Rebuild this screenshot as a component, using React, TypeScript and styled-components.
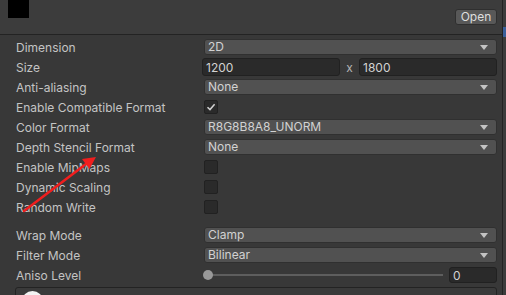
import React from "react";
import styled, { createGlobalStyle } from "styled-components";

const Global = createGlobalStyle`
  body {
    margin: 0;
    background: #383838;
    overflow: hidden;
    font-family: Inter, "Liberation Sans", sans-serif;
    font-size: 12px;
  }
`;

const Window = styled.div`
  position: relative;
  display: flex;
  width: 506px;
  height: 295px;
  overflow: hidden;
  background: #383838;
`;

const Main = styled.div`
  flex: 1;
  display: flex;
  flex-direction: column;
`;

const Header = styled.div`
  height: 34px;
  flex-shrink: 0;
  display: flex;
  justify-content: space-between;
  align-items: flex-start;
  background: #3c3c3c;
  border-bottom: 1px solid #232323;
`;

const Swatch = styled.div`
  width: 21px;
  height: 18px;
  margin-left: 8px;
  background: #000;
`;

const OpenButton = styled.div`
  margin-top: 9px;
  margin-right: 5px;
  width: 42px;
  height: 16px;
  box-sizing: border-box;
  border: 1px solid #2f2f2f;
  border-radius: 3px;
  background: #585858;
  color: #dedede;
  font-size: 12px;
  line-height: 14px;
  text-align: center;
`;

const Body = styled.div`
  padding: 2px 5px 0 16px;
  display: flex;
  flex-direction: column;
`;

const Row = styled.div`
  height: 20px;
  display: grid;
  grid-template-columns: 186px 1fr;
  align-items: center;
`;

const Label = styled.div`
  color: #c4c4c4;
  white-space: nowrap;
`;

const Gap = styled.div`
  height: 8px;
`;

const Popup = styled.div`
  height: 16px;
  margin-left: 2px;
  box-sizing: border-box;
  border: 1px solid #303030;
  border-radius: 3px;
  background: #515151;
  color: #d2d2d2;
  padding: 0 8px 0 3px;
  display: flex;
  align-items: center;
  justify-content: space-between;
  line-height: 14px;
`;

const Caret = styled.span`
  width: 0;
  height: 0;
  border-left: 4px solid transparent;
  border-right: 4px solid transparent;
  border-top: 5px solid #c4c4c4;
`;

const Field = styled.div<{ $h?: number }>`
  height: ${(p) => p.$h ?? 18}px;
  box-sizing: border-box;
  border: 1px solid #212121;
  border-radius: 3px;
  background: #2a2a2a;
  color: #d2d2d2;
  padding: 0 3px;
  display: flex;
  align-items: center;
`;

const Pair = styled.div`
  display: grid;
  grid-template-columns: 138px 19px 1fr;
  align-items: center;
`;

const Times = styled.span`
  color: #b4b4b4;
  text-align: center;
`;

const Check = styled.div`
  width: 14px;
  height: 14px;
  margin-left: 2px;
  box-sizing: border-box;
  border: 1px solid #212121;
  border-radius: 2px;
  background: #2a2a2a;
  display: flex;
  align-items: center;
  justify-content: center;
`;

const Slider = styled.div`
  display: flex;
  align-items: center;
  gap: 6px;
`;

const Track = styled.div`
  position: relative;
  flex: 1;
  height: 2px;
  margin-left: 6px;
  background: #5e5e5e;
`;

const Thumb = styled.div`
  position: absolute;
  left: -5px;
  top: -4px;
  width: 10px;
  height: 10px;
  border-radius: 50%;
  background: #999;
`;

const NumberField = styled(Field)`
  width: 48px;
  flex-shrink: 0;
`;

const Preview = styled.div`
  margin-top: 2px;
  margin-left: -1px;
  height: 40px;
  box-sizing: border-box;
  border: 1px solid #232323;
  border-radius: 3px;
  background: #3a3a3a;
  padding: 3px 0 0 6px;
`;

const Knob = styled.div`
  width: 21px;
  height: 21px;
  border-radius: 50%;
  background: #f2f2f2;
`;

const Scrollbar = styled.div`
  width: 3px;
  border-left: 1px solid #232323;
  background: #3c3c3c;
  padding-top: 27px;
`;

const ScrollThumb = styled.div`
  height: 10px;
  background: #3a5f9a;
`;

const Annotation = styled.svg`
  position: absolute;
  left: 0;
  top: 0;
  pointer-events: none;
`;

const Dropdown = ({ value }: { value: string }) => (
  <Popup>
    <span>{value}</span>
    <Caret />
  </Popup>
);

const CheckMark = () => (
  <svg width="10" height="10" viewBox="0 0 10 10">
    <path d="M1.5 5.2 L4 7.6 L8.6 2.2" fill="none" stroke="#d0d0d0" strokeWidth="1.5" />
  </svg>
);

export default function App() {
  return (
    <Window>
      <Global />
      <Main>
        <Header>
          <Swatch />
          <OpenButton>Open</OpenButton>
        </Header>
        <Body>
          <Row>
            <Label>Dimension</Label>
            <Dropdown value="2D" />
          </Row>
          <Row>
            <Label>Size</Label>
            <Pair>
              <Field>1200</Field>
              <Times>x</Times>
              <Field>1800</Field>
            </Pair>
          </Row>
          <Row>
            <Label>Anti-aliasing</Label>
            <Dropdown value="None" />
          </Row>
          <Row>
            <Label>Enable Compatible Format</Label>
            <Check>
              <CheckMark />
            </Check>
          </Row>
          <Row>
            <Label>Color Format</Label>
            <Dropdown value="R8G8B8A8_UNORM" />
          </Row>
          <Row>
            <Label>Depth Stencil Format</Label>
            <Dropdown value="None" />
          </Row>
          <Row>
            <Label>Enable MipMaps</Label>
            <Check />
          </Row>
          <Row>
            <Label>Dynamic Scaling</Label>
            <Check />
          </Row>
          <Row>
            <Label>Random Write</Label>
            <Check />
          </Row>
          <Gap />
          <Row>
            <Label>Wrap Mode</Label>
            <Dropdown value="Clamp" />
          </Row>
          <Row>
            <Label>Filter Mode</Label>
            <Dropdown value="Bilinear" />
          </Row>
          <Row>
            <Label>Aniso Level</Label>
            <Slider>
              <Track>
                <Thumb />
              </Track>
              <NumberField $h={16}>0</NumberField>
            </Slider>
          </Row>
          <Preview>
            <Knob />
          </Preview>
        </Body>
      </Main>
      <Scrollbar>
        <ScrollThumb />
      </Scrollbar>
      <Annotation width="506" height="295" viewBox="0 0 506 295">
        <line x1="24" y1="211" x2="86" y2="164" stroke="#f01e1e" strokeWidth="2.5" strokeLinecap="round" />
        <polygon points="96,157 89.5,169 82,159" fill="#f01e1e" />
      </Annotation>
    </Window>
  );
}
